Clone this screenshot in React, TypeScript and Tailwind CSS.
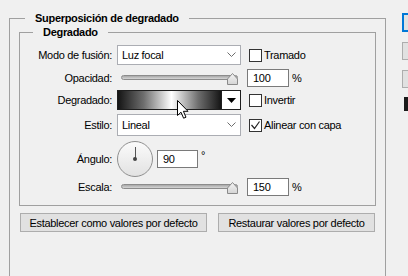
import React from "react";

const Chevron = () => (
  <svg width="9" height="6" viewBox="0 0 9 6" className="shrink-0">
    <path d="M0.5 0.5 L4.5 4.5 L8.5 0.5" fill="none" stroke="#6d6d6d" strokeWidth="1" />
  </svg>
);

const Checkbox = ({ checked = false }: { checked?: boolean }) => (
  <div className="w-[13px] h-[13px] border border-[#333333] bg-white shrink-0 flex items-center justify-center">
    {checked && (
      <svg width="11" height="11" viewBox="0 0 11 11">
        <path d="M1.5 5 L4.5 8.5 L9.5 1.5" fill="none" stroke="#222222" strokeWidth="1.2" />
      </svg>
    )}
  </div>
);

const Slider = () => (
  <div className="relative w-[124px] h-[14px] flex items-center shrink-0">
    <div className="ml-[4px] w-[117px] h-[5px] rounded-full border border-[#8c8c8c] bg-linear-to-b from-[#a8a8a8] to-[#d6d6d6]" />
    <svg width="11" height="12" viewBox="0 0 11 12" className="absolute right-[3px] top-[2px]">
      <defs>
        <linearGradient id="thumb" x1="0" y1="0" x2="0" y2="1">
          <stop offset="0" stopColor="#f4f4f4" />
          <stop offset="1" stopColor="#d4d4d4" />
        </linearGradient>
      </defs>
      <path d="M5.5 0.5 L10.5 6 L10.5 11.5 L0.5 11.5 L0.5 6 Z" fill="url(#thumb)" stroke="#8a8a8a" strokeLinejoin="round" />
    </svg>
  </div>
);

const NumInput = ({ value, w = "w-[42px]" }: { value: string; w?: string }) => (
  <div className={`${w} h-[18px] border border-[#7a7a7a] bg-white pl-[5px] flex items-center shrink-0`}>
    {value}
  </div>
);

const Label = ({ children }: { children: React.ReactNode }) => (
  <div className="w-[92px] mr-[5px] text-right shrink-0">{children}</div>
);

export default function App() {
  return (
    <div
      className="relative w-[408px] h-[276px] overflow-hidden bg-[#f0f0f0] flex text-[11px] leading-[14px] tracking-[-0.3px] text-black"
      style={{ fontFamily: '"Liberation Sans", Arial, sans-serif' }}
    >
      {/* Main panel */}
      <div className="pl-[9px] pt-[11px] shrink-0">
        <fieldset className="w-[377px] h-[300px] border border-[#a0a0a0]">
          <legend className="ml-[15px] px-[10px] font-bold text-[11px] leading-[14px]">
            Superposición de degradado
          </legend>

          <fieldset className="ml-[9px] w-[357px] border border-[#a0a0a0] pb-[9px]">
            <legend className="ml-[13px] px-[10px] font-bold text-[11px] leading-[14px]">Degradado</legend>

            <div className="flex flex-col pt-[6px]">
              <div className="flex items-center h-[20px]">
                <Label>Modo de fusión:</Label>
                <div className="w-[124px] h-[20px] border border-[#abadb3] bg-white flex items-center justify-between pl-[4px] pr-[4px] shrink-0">
                  <span>Luz focal</span>
                  <Chevron />
                </div>
                <div className="ml-[8px]">
                  <Checkbox />
                </div>
                <span className="ml-[2px]">Tramado</span>
              </div>

              <div className="flex items-center h-[19px] mt-[3px]">
                <Label>Opacidad:</Label>
                <Slider />
                <div className="ml-[6px]">
                  <NumInput value="100" />
                </div>
                <span className="ml-[3px]">%</span>
              </div>

              <div className="flex items-center h-[20px] mt-[3px]">
                <Label>Degradado:</Label>
                <div className="w-[124px] h-[20px] border border-[#1e1e1e] flex shrink-0">
                  <div className="flex-1 bg-[linear-gradient(to_right,#151515_0%,#6e6e6e_25%,#ffffff_52%,#6e6e6e_78%,#151515_100%)]" />
                  <div className="w-[19px] border-l border-[#1e1e1e] bg-white flex items-center justify-center">
                    <svg width="9" height="5" viewBox="0 0 9 5">
                      <path d="M0 0 L9 0 L4.5 5 Z" fill="#000" />
                    </svg>
                  </div>
                </div>
                <div className="ml-[8px]">
                  <Checkbox />
                </div>
                <span className="ml-[2px]">Invertir</span>
              </div>

              <div className="flex items-center h-[22px] mt-[4px]">
                <Label>Estilo:</Label>
                <div className="w-[124px] h-[22px] border border-[#abadb3] bg-white flex items-center justify-between pl-[4px] pr-[4px] shrink-0">
                  <span>Lineal</span>
                  <Chevron />
                </div>
                <div className="ml-[8px]">
                  <Checkbox checked />
                </div>
                <span className="ml-[2px]">Alinear con capa</span>
              </div>

              <div className="flex items-center h-[37px] mt-[4px]">
                <Label>Ángulo:</Label>
                <div className="relative w-[36px] h-[36px] rounded-full border border-[#8f8f8f] bg-linear-to-b from-[#fbfbfb] to-[#e2e2e2] shrink-0 flex justify-center">
                  <div className="mt-[5px] w-px h-[13px] bg-[#555555]" />
                  <div className="absolute left-[15px] top-[15px] w-[4px] h-[4px] rounded-full bg-[#444444]" />
                </div>
                <div className="ml-[4px]">
                  <NumInput value="90" w="w-[41px]" />
                </div>
                <span className="ml-[3px] self-start mt-[8px]">°</span>
              </div>

              <div className="flex items-center h-[19px]">
                <Label>Escala:</Label>
                <Slider />
                <div className="ml-[6px]">
                  <NumInput value="150" />
                </div>
                <span className="ml-[3px]">%</span>
              </div>
            </div>
          </fieldset>

          <div className="flex mt-[7px] ml-[10px] gap-[11px]">
            <button className="w-[187px] h-[19px] border border-[#adadad] bg-[#e1e1e1] flex items-center justify-center">
              Establecer como valores por defecto
            </button>
            <button className="w-[157px] h-[19px] border border-[#adadad] bg-[#e1e1e1] flex items-center justify-center">
              Restaurar valores por defecto
            </button>
          </div>
        </fieldset>
      </div>

      {/* Right column, cut off */}
      <div className="ml-[16px] pt-[13px] flex flex-col shrink-0">
        <div className="w-[20px] h-[19px] border-2 border-[#0078d7] bg-[#e1e1e1]" />
        <div className="mt-[10px] w-[20px] h-[18px] border border-[#adadad] bg-[#e1e1e1]" />
        <div className="mt-[10px] w-[20px] h-[18px] border border-[#adadad] bg-[#e1e1e1]" />
        <div className="mt-[9px] ml-[2px] w-[4px] h-[14px] bg-[#1a1a1a]" />
      </div>

      {/* Mouse cursor */}
      <svg width="13" height="20" viewBox="0 0 13 20" className="absolute left-[177px] top-[100px]">
        <path
          d="M0.5 0.5 L0.5 15.5 L4 12.2 L6.6 18.2 L9 17.2 L6.4 11.3 L11 11.3 Z"
          fill="#ffffff"
          stroke="#000000"
          strokeWidth="1"
          strokeLinejoin="round"
        />
      </svg>
    </div>
  );
}
